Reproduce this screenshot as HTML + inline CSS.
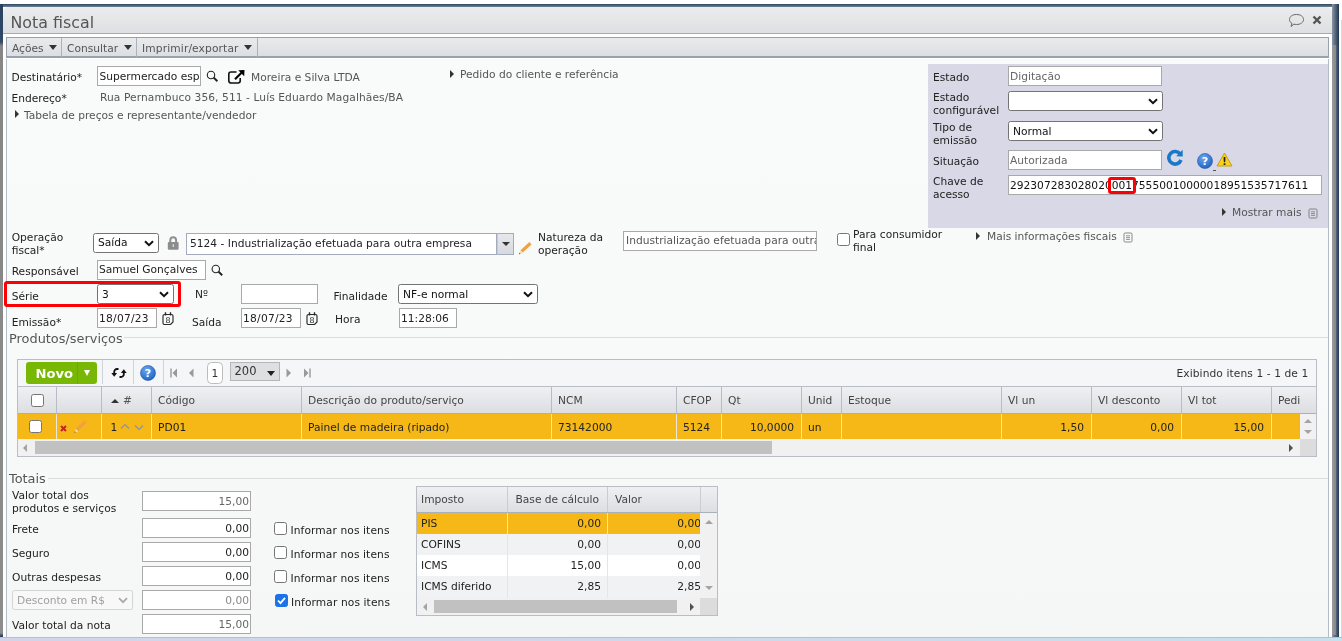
<!DOCTYPE html>
<html lang="pt-BR">
<head>
<meta charset="utf-8">
<title>Nota fiscal</title>
<style>
*{box-sizing:border-box;margin:0;padding:0}
html,body{width:1342px;height:641px;overflow:hidden;background:#fff}
body{position:relative;will-change:transform;font-family:"DejaVu Sans","Liberation Sans",sans-serif;font-size:10.67px;color:#222;line-height:13px}
.a{position:absolute;white-space:nowrap}
.l{position:absolute;white-space:nowrap;color:#222}
.g{color:#555}
.in{position:absolute;background:#fff;border:1px solid #a9a9a9;height:19px;padding:0 1px;line-height:17px;white-space:nowrap;overflow:hidden;color:#222}
.ro{color:#666}
.num{text-align:right}
.sel{position:absolute;background:#fff;border:1px solid #737373;border-radius:2.500px;height:19px;padding:0 4px;line-height:17px;white-space:nowrap;overflow:hidden;color:#111}
.sel svg{position:absolute;right:4px;top:6px}
.cb{position:absolute;width:13px;height:13px;border:1px solid #767676;border-radius:2.5px;background:#fff}
.hline{position:absolute;height:1px;background:#d9dbdd}
.leg{position:absolute;font-size:12.9px;color:#555;white-space:nowrap;line-height:15px}
.tri{position:absolute;width:0;height:0;border-left:4.500px solid #333;border-top:4.500px solid transparent;border-bottom:4.500px solid transparent;margin-top:-.5px}
.th{position:absolute;top:0;height:26px;border-right:1px solid #b6bdc7;line-height:27.500px;padding-left:6px;color:#444;white-space:nowrap;overflow:hidden}
.td{position:absolute;top:0;height:25px;border-right:1px solid #ece6d6;line-height:28px;padding:0 7px 0 6px;color:#222;white-space:nowrap;overflow:hidden}
</style>
</head>
<body>
<!-- outer frame -->
<div class="a" id="topband" style="left:0;top:4px;width:1339px;height:3px;background:linear-gradient(#2f4763,#6f8195)"></div>
<div class="a" id="leftband" style="left:0;top:4px;width:3px;height:633px;background:linear-gradient(#2a4260 0,#33496a 38px,#868686 42px,#8c8c8c 629px,#2a4260 632px)"></div>
<div class="a" id="rightband" style="left:1332px;top:4px;width:7px;height:633px;background:linear-gradient(90deg,#8b96a3,#1f3550)"></div><div class="a" style="left:1332px;top:45px;width:3.500px;height:590px;background:linear-gradient(90deg,#9c9c9c,#868686)"></div><div class="a" style="left:1335.500px;top:45px;width:3.500px;height:592px;background:linear-gradient(90deg,#566a82,#213852)"></div>
<div class="a" style="left:1341px;top:20px;width:1px;height:621px;background:#d8d8d8"></div>
<!-- window -->
<div class="a" id="win" style="left:3px;top:7px;width:1329px;height:634px;background:#fff;border-radius:5px 5px 0 0"></div>
<div class="a" id="titlebar" style="left:3px;top:7px;width:1329px;height:27px;border-radius:5px 5px 0 0;background:linear-gradient(#ebecee,#dddfe2);border-bottom:1px solid #a3abb4"></div>
<div class="a" style="left:10.500px;top:12.500px;font-size:15.850px;line-height:20px;color:#555">Nota fiscal</div>
<!-- title icons -->
<svg class="a" style="left:1288px;top:12.500px" width="18" height="16" viewBox="0 0 18 16"><path d="M8.5 1.5c4 0 7 2 7 5s-3 5-7 5c-.9 0-1.8-.1-2.600-.4L3 13.500l1-3C2.500 9.600 1.500 8.200 1.500 6.500c0-3 3-5 7-5z" fill="none" stroke="#666" stroke-width="1"/></svg>
<svg class="a" style="left:1312px;top:15px" width="10" height="10" viewBox="0 0 10 10"><path d="M1.500 1.500l7 7M8.500 1.500l-7 7" stroke="#555" stroke-width="2.400"/></svg>
<!-- toolbar -->
<div class="a" id="toolbar" style="left:6px;top:37px;width:1323px;height:21px;border:1px solid #98a2ad;border-bottom:2px solid #98a2ad;background:linear-gradient(#e9eaec,#dcdfe2)"></div>
<div class="a g" style="left:12px;top:42px">Ações</div>
<div class="a g" style="left:67px;top:42px">Consultar</div>
<div class="a g" style="left:142px;top:42px;letter-spacing:.13px">Imprimir/exportar</div>
<div class="a" style="left:61px;top:38px;width:1px;height:19px;background:#aab2bb"></div>
<div class="a" style="left:136px;top:38px;width:1px;height:19px;background:#aab2bb"></div>
<div class="a" style="left:257px;top:38px;width:1px;height:19px;background:#aab2bb"></div>
<!-- content -->
<div class="a" id="content" style="left:6px;top:59px;width:1323px;height:578px;background:linear-gradient(#f9fafa,#f8f9f9 50%,#f5f6f6);border-left:1px solid #b4bcc8;border-right:1px solid #b4bcc8"></div>

<!-- toolbar arrows -->
<div class="a" style="left:49px;top:44.500px;border-top:5px solid #333;border-left:4.200px solid transparent;border-right:4.200px solid transparent"></div>
<div class="a" style="left:123.500px;top:44.500px;border-top:5px solid #333;border-left:4.200px solid transparent;border-right:4.200px solid transparent"></div>
<div class="a" style="left:244px;top:44.500px;border-top:5px solid #333;border-left:4.200px solid transparent;border-right:4.200px solid transparent"></div>
<!-- row 1 -->
<div class="l" style="left:11.500px;top:71px">Destinatário*</div>
<div class="in" style="left:97px;top:66px;width:104px;height:20px;line-height:19px;padding-left:1.500px">Supermercado esp</div>
<svg class="a" style="left:204px;top:68px" width="16" height="16" viewBox="204 68 16 16"><circle cx="211" cy="75" r="3.700" fill="none" stroke="#222" stroke-width="1.100"/><path d="M213.800 77.800l3.600 3.500" stroke="#222" stroke-width="1.900"/></svg>
<svg class="a" style="left:226px;top:68px" width="20" height="18" viewBox="226 68 20 18"><path d="M236.500 72H231a2.200 2.200 0 0 0-2.200 2.200v6.600A2.200 2.200 0 0 0 231 83h7a2.200 2.200 0 0 0 2.200-2.200V78" fill="none" stroke="#111" stroke-width="1.600"/><path d="M235 79.200L242 72.200" stroke="#000" stroke-width="2.100"/><path d="M238.300 70.300L244.500 70 244.200 76.200z" fill="#000"/></svg>
<div class="l g" style="left:251px;top:71px">Moreira e Silva LTDA</div>
<div class="tri" style="left:450px;top:70px"></div>
<div class="l g" style="left:460px;top:68px">Pedido do cliente e referência</div>
<div class="l" style="left:11.500px;top:92px">Endereço*</div>
<div class="l g" style="left:100px;top:91px;letter-spacing:.08px">Rua Pernambuco 356, 511 - Luís Eduardo Magalhães/BA</div>
<div class="tri" style="left:15px;top:110px"></div>
<div class="l g" style="left:24px;top:109px">Tabela de preços e representante/vendedor</div>
<!-- right panel -->
<div class="a" id="rpanel" style="left:928px;top:64px;width:400px;height:163.500px;background:#d8d8e6"></div>
<div class="l" style="left:933px;top:71px">Estado</div>
<div class="in ro" style="left:1008px;top:66px;width:154px;height:20px;line-height:20px">Digitação</div>
<div class="l" style="left:933px;top:91px;line-height:13px">Estado<br>configurável</div>
<div class="sel" style="left:1008px;top:91px;width:155px;height:20px;line-height:18px"><svg width="10" height="7" viewBox="0 0 10 7"><path d="M1 1.200l4 4 4-4" fill="none" stroke="#111" stroke-width="2"/></svg></div>
<div class="l" style="left:933px;top:121px;line-height:13px">Tipo de<br>emissão</div>
<div class="sel" style="left:1008px;top:121px;width:155px;height:20px;line-height:20px">Normal <svg width="10" height="7" viewBox="0 0 10 7"><path d="M1 1.200l4 4 4-4" fill="none" stroke="#111" stroke-width="2"/></svg></div>
<div class="l" style="left:933px;top:155px">Situação</div>
<div class="in ro" style="left:1008px;top:150px;width:154px;height:20px;line-height:20px">Autorizada</div>
<div class="l" style="left:933px;top:175px;line-height:13px">Chave de<br>acesso</div>
<div class="in" style="left:1008px;top:175px;height:20px;line-height:20px;width:314px;color:#111;padding-left:1px">29230728302802000175550010000018951535717611</div>
<div class="a" style="left:1108px;top:177px;width:28px;height:17px;border:3px solid #fb0007;border-radius:3px"></div>
<div class="tri" style="left:1222px;top:208px"></div>
<div class="l g" style="left:1232px;top:206px">Mostrar mais</div>
<svg class="a" style="left:1307.500px;top:207.500px" width="10" height="11" viewBox="0 0 10 11"><rect x="1" y="1" width="8" height="9" rx="1.200" fill="none" stroke="#7a7a7a" stroke-width=".9"/><path d="M3 3.800h4M3 5.600h4M3 7.400h4" stroke="#7a7a7a" stroke-width=".8"/></svg>

<!-- operacao row -->
<div class="l" style="left:11.700px;top:232px;line-height:12.500px">Operação<br>fiscal*</div>
<div class="sel" style="left:93px;top:233px;width:66px;height:20px;line-height:18px">Saída <svg width="10" height="7" viewBox="0 0 10 7"><path d="M1 1.200l4 4 4-4" fill="none" stroke="#111" stroke-width="2"/></svg></div>
<svg class="a" style="left:166px;top:235px" width="14" height="16" viewBox="166 235 14 16"><path d="M170.300 242.500v-2.300a2.900 2.900 0 0 1 5.800 0v2.300" fill="none" stroke="#8f8f8f" stroke-width="2"/><rect x="167.800" y="241.900" width="10.800" height="7.900" rx="1.200" fill="#8c8c8c"/><rect x="172.700" y="244.300" width="1.200" height="2.600" fill="#e8e8e8"/></svg>
<div class="in" style="left:186px;top:233px;width:311px;height:22px;line-height:20px;padding-left:3px;border-color:#a3acbc">5124 - Industrialização efetuada para outra empresa</div>
<div class="a" style="left:497px;top:233px;width:17px;height:22px;border:1px solid #a3acbc;border-left:1px solid #c4c9d2;background:linear-gradient(#e6e8ec,#d6d9df)"><div class="a" style="left:3.500px;top:8px;border-top:4.500px solid #333;border-left:4px solid transparent;border-right:4px solid transparent"></div></div>
<svg class="a" style="left:517px;top:240px" width="17" height="16" viewBox="517 240 17 16"><path d="M521.600 251.400L530.500 243.300" stroke="#f2a13c" stroke-width="3.300"/><path d="M519 254.200l1.300-3.900 2.600 2.600z" fill="#f3dfb8"/><path d="M519 254.200l.5-1.500 1 1z" fill="#333"/></svg>
<div class="l" style="left:538px;top:231px;line-height:13px">Natureza da<br>operação</div>
<div class="in ro" style="left:623px;top:231px;width:194px;height:20px;line-height:18px;color:#555;padding-left:2px">Industrialização efetuada para outra empresa</div>
<div class="cb" style="left:836.500px;top:233px"></div>
<div class="l" style="left:853px;top:228px;line-height:13px">Para consumidor<br>final</div>
<div class="tri" style="left:976px;top:232px"></div>
<div class="l g" style="left:987px;top:230px">Mais informações fiscais</div>
<svg class="a" style="left:1122.500px;top:231.500px" width="10" height="11" viewBox="0 0 10 11"><rect x="1" y="1" width="8" height="9" rx="1.200" fill="none" stroke="#7a7a7a" stroke-width=".9"/><path d="M3 3.800h4M3 5.600h4M3 7.400h4" stroke="#7a7a7a" stroke-width=".8"/></svg>
<!-- responsavel -->
<div class="l" style="left:11.700px;top:265px">Responsável</div>
<div class="in" style="left:97px;top:260px;width:109px;height:20px;line-height:18px">Samuel Gonçalves</div>
<svg class="a" style="left:209px;top:262px" width="16" height="16" viewBox="209 262 16 16"><circle cx="215.800" cy="269" r="3.700" fill="none" stroke="#222" stroke-width="1.100"/><path d="M218.600 271.800l3.600 3.500" stroke="#222" stroke-width="1.900"/></svg>
<!-- serie -->
<div class="a" style="left:4px;top:281px;width:177px;height:26px;border:3px solid #fb0007;border-radius:3px"></div>
<div class="l" style="left:11.700px;top:290px">Série</div>
<div class="sel" style="left:97px;top:284px;width:77px;height:20px;line-height:19.500px">3 <svg width="10" height="7" viewBox="0 0 10 7"><path d="M1 1.200l4 4 4-4" fill="none" stroke="#111" stroke-width="2"/></svg></div>
<div class="l" style="left:195px;top:288px">Nº</div>
<div class="in" style="left:241px;top:284px;width:77px;height:20px"></div>
<div class="l" style="left:333.500px;top:290px">Finalidade</div>
<div class="sel" style="left:398px;top:284px;width:140px;height:20px;line-height:19.500px">NF-e normal <svg width="10" height="7" viewBox="0 0 10 7"><path d="M1 1.200l4 4 4-4" fill="none" stroke="#111" stroke-width="2"/></svg></div>
<!-- emissao -->
<div class="l" style="left:11.700px;top:316px">Emissão*</div>
<div class="in" style="left:97px;top:308px;width:60px;height:20px;line-height:19.500px;letter-spacing:.25px">18/07/23</div>
<svg class="a" style="left:162px;top:311.700px" width="12" height="13" viewBox="0 0 12 13"><path d="M2.500 2.500h7a1.500 1.500 0 0 1 1.500 1.500v6l-2.500 2.500h-6a1.500 1.500 0 0 1-1.500-1.500v-7a1.500 1.500 0 0 1 1.500-1.500z" fill="none" stroke="#2a2a2a" stroke-width="1.150"/><path d="M3.500 .3v3.200M8.500 .3v3.200" stroke="#2a2a2a" stroke-width="1.400"/><text x="6" y="11" font-size="7.800" text-anchor="middle" fill="#222" font-family="DejaVu Sans, sans-serif">8</text></svg>
<div class="l" style="left:192px;top:316px">Saída</div>
<div class="in" style="left:241px;top:308px;width:60px;height:20px;line-height:19.500px;letter-spacing:.25px">18/07/23</div>
<svg class="a" style="left:306px;top:311.700px" width="12" height="13" viewBox="0 0 12 13"><path d="M2.500 2.500h7a1.500 1.500 0 0 1 1.500 1.500v6l-2.500 2.500h-6a1.500 1.500 0 0 1-1.500-1.500v-7a1.500 1.500 0 0 1 1.500-1.500z" fill="none" stroke="#2a2a2a" stroke-width="1.150"/><path d="M3.500 .3v3.200M8.500 .3v3.200" stroke="#2a2a2a" stroke-width="1.400"/><text x="6" y="11" font-size="7.800" text-anchor="middle" fill="#222" font-family="DejaVu Sans, sans-serif">8</text></svg>
<div class="l" style="left:335px;top:313px">Hora</div>
<div class="in" style="left:399px;top:308px;width:58px;height:20px;line-height:19.500px">11:28:06</div>
<!-- fieldset produtos -->
<div class="hline" style="left:7px;top:337px;width:1321px"></div>
<div class="leg" style="left:7px;top:331px;background:#f8f9f9;padding:0 1px 0 2px">Produtos/serviços</div>

<!-- grid -->
<div class="a" id="grid" style="left:17px;top:359px;width:1300px;height:98px;border:1px solid #b9bdc6;background:#f1f1f1">
 <div class="a" style="left:0;top:0;width:1298px;height:26px;background:#f5f6f7"></div>
 <div class="a" id="ghead" style="left:0;top:26px;width:1298px;height:28px;background:linear-gradient(#eff0f2,#dcdee2);border-bottom:1px solid #a9b0ba;border-top:1px solid #b9bdc6;overflow:hidden"><div class="th" style="left:0px;width:39px"></div><div class="th" style="left:39px;width:45px"></div><div class="th" style="left:84px;width:50px"><span style="display:inline-block;border-bottom:4px solid #333;border-left:4px solid transparent;border-right:4px solid transparent;margin:0 4px 1px 3px"></span><span style="color:#555">#</span></div><div class="th" style="left:134px;width:150px">Código</div><div class="th" style="left:284px;width:250px">Descrição do produto/serviço</div><div class="th" style="left:534px;width:125px">NCM</div><div class="th" style="left:659px;width:45px">CFOP</div><div class="th" style="left:704px;width:80px">Qt</div><div class="th" style="left:784px;width:40px">Unid</div><div class="th" style="left:824px;width:160px">Estoque</div><div class="th" style="left:984px;width:90px">Vl un</div><div class="th" style="left:1074px;width:90px">Vl desconto</div><div class="th" style="left:1164px;width:90px">Vl tot</div><div class="th" style="left:1254px;width:28px;border-right:0">Pedi</div></div>
 <div class="a" id="grow" style="left:0;top:54px;width:1282px;height:25px;background:#f5b817;overflow:hidden"><div class="td" style="left:0px;width:39px"></div><div class="td" style="left:39px;width:45px"></div><div class="td" style="left:84px;width:50px"></div><div class="td" style="left:134px;width:150px">PD01</div><div class="td" style="left:284px;width:250px">Painel de madeira (ripado)</div><div class="td" style="left:534px;width:125px">73142000</div><div class="td" style="left:659px;width:45px">5124</div><div class="td num" style="left:704px;width:80px">10,0000</div><div class="td" style="left:784px;width:40px">un</div><div class="td" style="left:824px;width:160px"></div><div class="td num" style="left:984px;width:90px">1,50</div><div class="td num" style="left:1074px;width:90px">0,00</div><div class="td num" style="left:1164px;width:90px">15,00</div><div class="td" style="left:1254px;width:28px;border-right:0"></div></div>
 <div class="a" style="left:1282px;top:54px;width:16px;height:25px;background:#f1f1f1"></div>
 <div class="a" style="left:0;top:79px;width:1298px;height:17px;background:#f1f1f1"></div>
 <div class="a" style="left:17px;top:81px;width:737px;height:13px;background:#c1c1c1"></div>
 <div class="a" style="left:1282px;top:79px;width:16px;height:17px;background:#dcdcdc"></div>
 <div class="a" style="left:5px;top:83.500px;border-right:4px solid #a3a3a3;border-top:4px solid transparent;border-bottom:4px solid transparent"></div>
 <div class="a" style="left:1271px;top:83.500px;border-left:4px solid #505050;border-top:4px solid transparent;border-bottom:4px solid transparent"></div>
 <div class="a" style="left:1286px;top:59px;border-bottom:4px solid #a3a3a3;border-left:4px solid transparent;border-right:4px solid transparent"></div>
 <div class="a" style="left:1286px;top:70px;border-top:4px solid #a3a3a3;border-left:4px solid transparent;border-right:4px solid transparent"></div>
</div>
<!-- grid toolbar -->
<div class="a" style="left:26px;top:362px;width:71px;height:22px;border-radius:3px;background:#78b703"></div>
<div class="a" style="left:35.500px;top:365.500px;color:#fff;font-weight:bold;font-size:13.100px;line-height:15px">Novo</div>
<div class="a" style="left:77px;top:362px;width:1px;height:22px;background:#6ea802"></div>
<div class="a" style="left:84px;top:370px;border-top:6px solid #fff;border-left:3.500px solid transparent;border-right:3.500px solid transparent"></div>
<div class="a" style="left:102px;top:360px;width:1px;height:24px;background:#d0d3d8"></div>
<div class="a" style="left:133px;top:360px;width:1px;height:24px;background:#d0d3d8"></div><div class="a" style="left:163px;top:360px;width:1px;height:24px;background:#d0d3d8"></div>
<svg class="a" style="left:111px;top:367px" width="16" height="12" viewBox="0 0 16 12"><path d="M7.500 2H6A2.800 2.800 0 0 0 3.200 4.800V7" fill="none" stroke="#111" stroke-width="1.800"/><path d="M.3 6h5.800L3.200 9.800z" fill="#111"/><path d="M8.500 10H10A2.800 2.800 0 0 0 12.800 7.200V5" fill="none" stroke="#111" stroke-width="1.800"/><path d="M9.900 6h5.800L12.800 2.200z" fill="#111"/></svg>
<svg class="a" style="left:140px;top:365px" width="16" height="16" viewBox="0 0 17 17"><defs><radialGradient id="hg1" cx=".4" cy=".3" r=".8"><stop offset="0" stop-color="#6aa8f0"/><stop offset="1" stop-color="#1a5cc0"/></radialGradient></defs><circle cx="8.500" cy="8.500" r="8" fill="url(#hg1)" stroke="#2050a0" stroke-width=".6"/><text x="8.500" y="13" font-size="12" font-weight="bold" text-anchor="middle" fill="#fff" font-family="DejaVu Sans, sans-serif">?</text></svg>
<svg class="a" style="left:170px;top:368px" width="8" height="10" viewBox="0 0 8 10"><path d="M1 .5v9" stroke="#999" stroke-width="1.400"/><path d="M7 .5v9L2.500 5z" fill="#999"/></svg>
<svg class="a" style="left:188px;top:368px" width="6" height="10" viewBox="0 0 6 10"><path d="M5.500 .5v9L1 5z" fill="#999"/></svg>
<div class="a" style="left:207px;top:362px;width:16px;height:22px;border:1px solid #bcbcbc;border-radius:4.500px;background:#fff;text-align:center;line-height:21px;color:#333">1</div>
<div class="a" style="left:230px;top:362px;width:50px;height:19px;background:#dedfe1;border:1px solid #b4b6ba;line-height:17.500px;padding-left:3.500px;color:#333;font-size:11.500px">200</div>
<div class="a" style="left:266.500px;top:370.500px;border-top:5px solid #222;border-left:4.500px solid transparent;border-right:4.500px solid transparent"></div>
<svg class="a" style="left:286px;top:368px" width="6" height="10" viewBox="0 0 6 10"><path d="M.5 .5v9L5 5z" fill="#999"/></svg>
<svg class="a" style="left:303px;top:368px" width="8" height="10" viewBox="0 0 8 10"><path d="M7 .5v9" stroke="#999" stroke-width="1.400"/><path d="M1 .5v9L5.500 5z" fill="#999"/></svg>
<div class="l" style="left:1176.500px;top:366.500px;color:#333;letter-spacing:.09px">Exibindo itens 1 - 1 de 1</div>
<!-- grid cell widgets -->
<div class="cb" style="left:31px;top:394px"></div>
<div class="cb" style="left:29px;top:420px"></div>
<svg class="a" style="left:60px;top:424.500px" width="7" height="7" viewBox="0 0 7 7"><path d="M1 1l5 5M6 1l-5 5" stroke="#c4222c" stroke-width="1.900"/></svg>
<svg class="a" style="left:72px;top:418px" width="17" height="17" viewBox="72 418 17 17"><path d="M77 429.900L85.600 421.500" stroke="#f2a13c" stroke-width="3.300"/><path d="M74.400 432.800l1.300-3.900 2.600 2.600z" fill="#f3dfb8"/><path d="M74.400 432.800l.5-1.500 1 1z" fill="#333"/></svg>
<div class="l" style="left:110.500px;top:421px">1</div>
<svg class="a" style="left:120px;top:423px" width="10" height="7" viewBox="0 0 10 7"><path d="M1 5.500l4-4 4 4" fill="none" stroke="#8a93a8" stroke-width="1.200"/></svg>
<svg class="a" style="left:134px;top:424px" width="10" height="7" viewBox="0 0 10 7"><path d="M1 1.500l4 4 4-4" fill="none" stroke="#8a93a8" stroke-width="1.200"/></svg>

<!-- totais -->
<div class="hline" style="left:7px;top:478px;width:1321px"></div>
<div class="leg" style="left:7px;top:471px;background:#f8f9f9;padding:0 2px 0 2px">Totais</div>
<div class="l" style="left:12px;top:488.500px;line-height:13px">Valor total dos<br>produtos e serviços</div>
<div class="in num ro" style="left:142px;top:491px;width:109px;height:20px;line-height:19.500px">15,00</div>
<div class="l" style="left:12px;top:522.500px">Frete</div>
<div class="in num" style="left:142px;top:518px;width:109px;height:20px;line-height:19.500px">0,00</div>
<div class="l" style="left:12px;top:546.500px">Seguro</div>
<div class="in num" style="left:142px;top:542px;width:109px;height:20px;line-height:19.500px">0,00</div>
<div class="l" style="left:12px;top:570.500px">Outras despesas</div>
<div class="in num" style="left:142px;top:566px;width:109px;height:20px;line-height:19.500px">0,00</div>
<div class="sel" style="left:12px;top:590px;width:121px;height:20px;border-color:#d4d4d4;color:#a0a0a0;background:#f8f8f8;line-height:20.500px">Desconto em R$ <svg width="10" height="7" viewBox="0 0 10 7"><path d="M1 1.200l4 4 4-4" fill="none" stroke="#a8a8a8" stroke-width="1.700"/></svg></div>
<div class="in num ro" style="left:142px;top:590px;width:109px;height:20px;line-height:19.500px;color:#888">0,00</div>
<div class="l" style="left:12px;top:618.500px">Valor total da nota</div>
<div class="in num ro" style="left:142px;top:614px;width:109px;height:20px;line-height:19.500px">15,00</div>
<div class="cb" style="left:274px;top:522px"></div>
<div class="l" style="left:290.500px;top:523.500px;letter-spacing:.1px">Informar nos itens</div>
<div class="cb" style="left:274px;top:546px"></div>
<div class="l" style="left:290.500px;top:547.500px;letter-spacing:.1px">Informar nos itens</div>
<div class="cb" style="left:274px;top:570px"></div>
<div class="l" style="left:290.500px;top:571.500px;letter-spacing:.1px">Informar nos itens</div>
<div class="cb" style="left:274.500px;top:594px;background:#1a73e8;border-color:#1a73e8"><svg class="a" style="left:0;top:0" width="11" height="11" viewBox="0 0 11 11"><path d="M2 5.500l2.500 2.700L9 2.800" fill="none" stroke="#fff" stroke-width="1.800"/></svg></div>
<div class="l" style="left:291px;top:595.500px;letter-spacing:.1px">Informar nos itens</div>
<!-- tax grid -->
<div class="a" id="tax" style="left:416px;top:486px;width:302px;height:130px;border:1px solid #b9bdc6;background:#f1f1f1;overflow:hidden">
 <div class="a" style="left:0;top:0;width:300px;height:26px;background:linear-gradient(#eff0f2,#dcdee2);border-bottom:1px solid #a9b0ba"></div>
 <div class="a" style="left:4px;top:0;line-height:25px;color:#444">Imposto</div>
 <div class="a" style="left:98.500px;top:0;line-height:25px;color:#444">Base de cálculo</div>
 <div class="a" style="left:198px;top:0;line-height:25px;color:#444">Valor</div>
 <div class="a" style="left:90px;top:0;width:1px;height:25px;background:#c9ccd1"></div>
 <div class="a" style="left:190px;top:0;width:1px;height:25px;background:#c9ccd1"></div>
 <div class="a" style="left:283px;top:0;width:1px;height:25px;background:#c9ccd1"></div>
 <div class="a" style="left:0;top:26px;width:283px;height:21px;background:#f5b817;line-height:22px;color:#222"><div class="a" style="left:4px">PIS</div><div class="a" style="left:91px;width:93px;text-align:right">0,00</div><div class="a" style="left:191px;width:93px;text-align:right">0,00</div><div class="a" style="left:90px;top:0;width:1px;height:22px;background:#e4e5e8"></div><div class="a" style="left:190px;top:0;width:1px;height:22px;background:#e4e5e8"></div></div><div class="a" style="left:0;top:47px;width:283px;height:21px;background:#f1f2f4;line-height:21px;color:#222"><div class="a" style="left:4px">COFINS</div><div class="a" style="left:91px;width:93px;text-align:right">0,00</div><div class="a" style="left:191px;width:93px;text-align:right">0,00</div><div class="a" style="left:90px;top:0;width:1px;height:21px;background:#e4e5e8"></div><div class="a" style="left:190px;top:0;width:1px;height:21px;background:#e4e5e8"></div></div><div class="a" style="left:0;top:68px;width:283px;height:21px;background:#ffffff;line-height:21px;color:#222"><div class="a" style="left:4px">ICMS</div><div class="a" style="left:91px;width:93px;text-align:right">15,00</div><div class="a" style="left:191px;width:93px;text-align:right">0,00</div><div class="a" style="left:90px;top:0;width:1px;height:21px;background:#e4e5e8"></div><div class="a" style="left:190px;top:0;width:1px;height:21px;background:#e4e5e8"></div></div><div class="a" style="left:0;top:89px;width:283px;height:22px;background:#f1f2f4;line-height:22px;color:#222"><div class="a" style="left:4px">ICMS diferido</div><div class="a" style="left:91px;width:93px;text-align:right">2,85</div><div class="a" style="left:191px;width:93px;text-align:right">2,85</div><div class="a" style="left:90px;top:0;width:1px;height:22px;background:#e4e5e8"></div><div class="a" style="left:190px;top:0;width:1px;height:22px;background:#e4e5e8"></div></div>
 <div class="a" style="left:283px;top:26px;width:17px;height:85px;background:#f1f1f1"></div>
 <div class="a" style="left:288px;top:33px;border-bottom:4px solid #a3a3a3;border-left:4px solid transparent;border-right:4px solid transparent"></div>
 <div class="a" style="left:288px;top:99px;border-top:4px solid #a3a3a3;border-left:4px solid transparent;border-right:4px solid transparent"></div>
 <div class="a" style="left:0;top:111px;width:300px;height:17px;background:#f1f1f1"></div>
 <div class="a" style="left:17px;top:113px;width:243px;height:13px;background:#c1c1c1"></div>
 <div class="a" style="left:6px;top:115.500px;border-right:4px solid #a3a3a3;border-top:4px solid transparent;border-bottom:4px solid transparent"></div>
 <div class="a" style="left:273px;top:115.500px;border-left:4px solid #505050;border-top:4px solid transparent;border-bottom:4px solid transparent"></div>
 <div class="a" style="left:283px;top:111px;width:17px;height:17px;background:#dcdcdc"></div>
</div>

<!-- situacao icons -->
<svg class="a" style="left:1166px;top:149px" width="18" height="17" viewBox="0 0 18 17"><path d="M14.300 5.200A6.300 6.300 0 1 0 15 11" fill="none" stroke="#1a78c8" stroke-width="3.600"/><path d="M10.200 7.200L16.800 7.600 16.600 .8z" fill="#1a78c8"/></svg>
<svg class="a" style="left:1197px;top:153px" width="16" height="16" viewBox="0 0 17 17"><defs><radialGradient id="hg2" cx=".4" cy=".3" r=".8"><stop offset="0" stop-color="#6aa8f0"/><stop offset="1" stop-color="#1a5cc0"/></radialGradient></defs><circle cx="8.500" cy="8.500" r="8" fill="url(#hg2)" stroke="#2050a0" stroke-width=".6"/><text x="8.500" y="13" font-size="12" font-weight="bold" text-anchor="middle" fill="#fff" font-family="DejaVu Sans, sans-serif">?</text></svg>
<svg class="a" style="left:1216px;top:152px" width="17" height="15" viewBox="0 0 17 15"><path d="M8.500 1L16 14H1z" fill="#f8d020" stroke="#c8a010" stroke-width="1" stroke-linejoin="round"/><text x="8.500" y="12.500" font-size="10" font-weight="bold" text-anchor="middle" fill="#222" font-family="DejaVu Sans, sans-serif">!</text></svg>
<div class="a" style="left:1212.500px;top:170px;width:3px;height:1px;background:#555"></div>
<div class="a" id="bottomband" style="left:0;top:637px;width:1342px;height:4px;background:linear-gradient(90deg,#d2d5ea,#cdd9ea 50%,#c6e0ed);border-top:1px solid #b7bfca"></div>
</body>
</html>
